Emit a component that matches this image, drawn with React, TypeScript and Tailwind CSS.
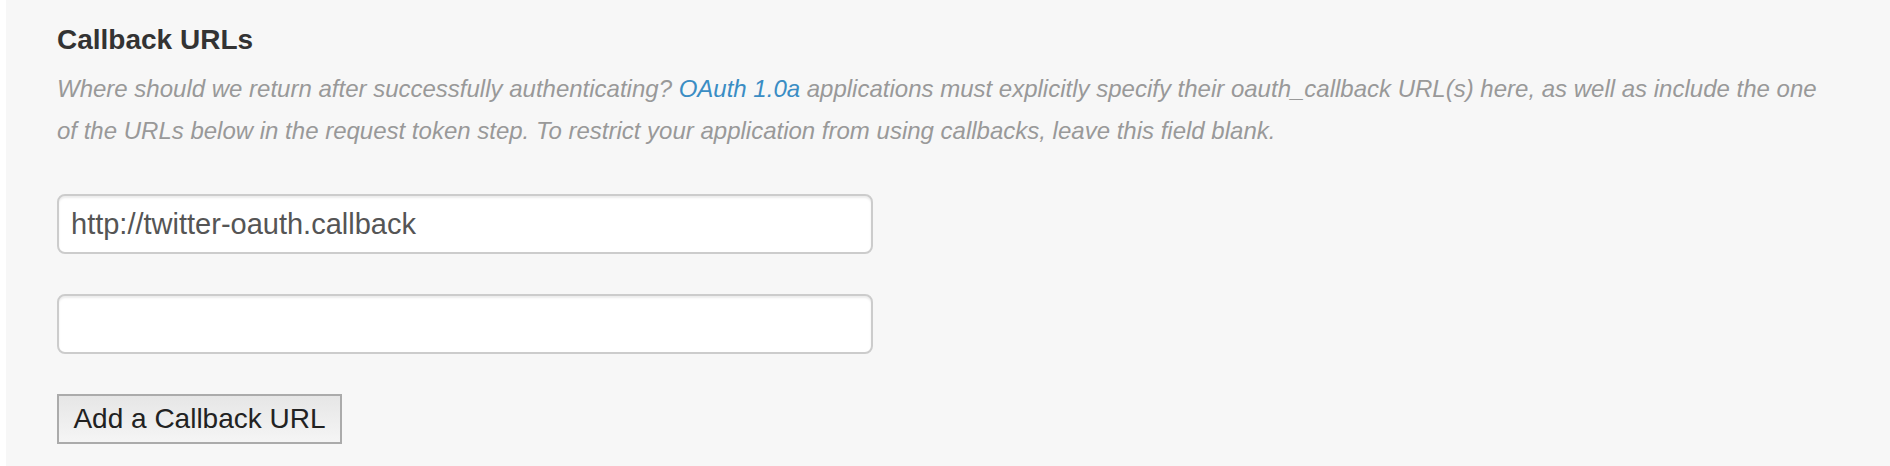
import React from "react";

export default function App() {
  return (
    <div className="flex w-full h-[466px] bg-white" style={{ fontFamily: '"Liberation Sans", Arial, sans-serif' }}>
      <div className="w-[6px] shrink-0 bg-white" />
      <div className="flex-1 bg-[#f7f7f7] pl-[51px] pt-[20px]">
        <h3 className="text-[28px] leading-[40px] font-bold text-[#333]">Callback URLs</h3>
        <p className="mt-[8px] w-[1780px] text-[24px] leading-[42px] italic text-[#999]">
          Where should we return after successfully authenticating? <span className="text-[#3a8dc4]">OAuth 1.0a</span> applications must explicitly specify their oauth_callback URL(s) here, as well as include the one of the URLs below in the request token step. To restrict your application from using callbacks, leave this field blank.
        </p>
        <div className="mt-[42px] flex flex-col gap-[40px]">
          <input
            type="text"
            defaultValue="http://twitter-oauth.callback"
            className="box-border w-[816px] h-[60px] rounded-[8px] border-2 border-[#ccc] bg-white px-[12px] text-[29px] text-[#555] shadow-[inset_0_2px_2px_rgba(0,0,0,0.075)] outline-none"
            style={{ fontFamily: '"Liberation Sans", Arial, sans-serif' }}
          />
          <input
            type="text"
            defaultValue=""
            className="box-border w-[816px] h-[60px] rounded-[8px] border-2 border-[#ccc] bg-white px-[12px] text-[29px] text-[#555] shadow-[inset_0_2px_2px_rgba(0,0,0,0.075)] outline-none"
            style={{ fontFamily: '"Liberation Sans", Arial, sans-serif' }}
          />
          <div>
            <button
              type="button"
              className="box-border w-[285px] h-[50px] border-2 border-[#ababab] bg-gradient-to-b from-[#e6e6e6] to-[#f5f5f5] text-[28px] leading-none text-[#222]"
              style={{ fontFamily: '"Liberation Sans", Arial, sans-serif' }}
            >
              Add a Callback URL
            </button>
          </div>
        </div>
      </div>
    </div>
  );
}
